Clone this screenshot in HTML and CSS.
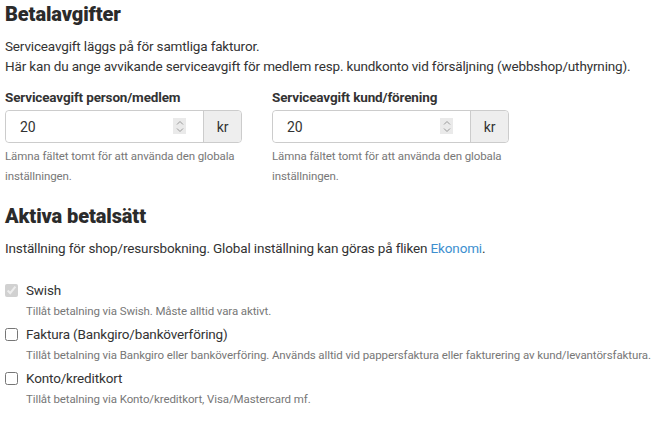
FILE: index.html
```html
<!DOCTYPE html>
<html lang="sv">
<head>
    <meta charset="UTF-8">
    <title>Betalavgifter</title>
    <link rel="stylesheet" href="styles.css">
</head>
<body>
    <div class="settings">
        <h2>Betalavgifter</h2>
        <p>Serviceavgift läggs på för samtliga fakturor.<br>
        Här kan du ange avvikande serviceavgift för medlem resp. kundkonto vid försäljning (webbshop/uthyrning).</p>

        <div class="fee-row">
            <div class="fee-col">
                <label for="feePerson">Serviceavgift person/medlem</label>
                <div class="input-group">
                    <div class="input-wrap">
                        <input type="text" id="feePerson" value="20">
                        <span class="spin"><svg width="12" height="15" viewBox="0 0 12 15"><path d="M3 5.5 6 2.5 9 5.5M3 9.5 6 12.5 9 9.5" fill="none" stroke="#999" stroke-width="1"/></svg></span>
                    </div>
                    <span class="addon">kr</span>
                </div>
                <div class="help">Lämna fältet tomt för att använda den globala inställningen.</div>
            </div>
            <div class="fee-col">
                <label for="feeCustomer">Serviceavgift kund/förening</label>
                <div class="input-group">
                    <div class="input-wrap">
                        <input type="text" id="feeCustomer" value="20">
                        <span class="spin"><svg width="12" height="15" viewBox="0 0 12 15"><path d="M3 5.5 6 2.5 9 5.5M3 9.5 6 12.5 9 9.5" fill="none" stroke="#999" stroke-width="1"/></svg></span>
                    </div>
                    <span class="addon">kr</span>
                </div>
                <div class="help">Lämna fältet tomt för att använda den globala inställningen.</div>
            </div>
        </div>

        <h2 class="second">Aktiva betalsätt</h2>
        <p>Inställning för shop/resursbokning. Global inställning kan göras på fliken <a href="#">Ekonomi</a>.</p>

        <div class="methods">
            <div class="method">
                <label class="check disabled"><input type="checkbox" checked disabled> Swish</label>
                <div class="help">Tillåt betalning via Swish. Måste alltid vara aktivt.</div>
            </div>
            <div class="method">
                <label class="check"><input type="checkbox"> Faktura (Bankgiro/banköverföring)</label>
                <div class="help">Tillåt betalning via Bankgiro eller banköverföring. Används alltid vid pappersfaktura eller fakturering av kund/levantörsfaktura.</div>
            </div>
            <div class="method">
                <label class="check"><input type="checkbox"> Konto/kreditkort</label>
                <div class="help">Tillåt betalning via Konto/kreditkort, Visa/Mastercard mf.</div>
            </div>
        </div>
    </div>
</body>
</html>
```

FILE: styles.css
```css
body {
    font-family: Roboto, Arial, sans-serif;
    margin: 0;
    padding: 0;
    background-color: #fff;
    color: #333;
    font-size: 13.5px;
    letter-spacing: -0.15px;
}
.settings {
    padding: 0 5px;
}
h2 {
    font-size: 20px;
    font-weight: 900;
    color: #2b2b2b;
    margin: 1px 0 9px;
    line-height: 26px;
    letter-spacing: -0.1px;
}
h2.second {
    margin-top: 17px;
}
p {
    margin: 0;
    line-height: 20px;
    white-space: nowrap;
}
.fee-row {
    display: flex;
    gap: 30px;
    margin-top: 11px;
}
.fee-col {
    width: 237px;
}
.fee-col label {
    display: block;
    font-weight: 700;
    line-height: 20px;
    margin-bottom: 3px;
}
.input-group {
    display: flex;
    height: 33px;
    border: 1px solid #ccc;
    border-radius: 4px;
    box-sizing: border-box;
}
.input-wrap {
    position: relative;
    flex: 1;
}
.input-wrap input {
    width: 100%;
    height: 100%;
    box-sizing: border-box;
    border: none;
    border-radius: 4px 0 0 4px;
    padding: 0 14px;
    font-family: inherit;
    font-size: 14px;
    color: #333;
    background: #fff;
    outline: none;
}
.spin {
    position: absolute;
    right: 17px;
    top: 7px;
    width: 13px;
    height: 16px;
    background: #eaeaea;
    display: flex;
    align-items: center;
    justify-content: center;
}
.addon {
    width: 37px;
    border-left: 1px solid #ccc;
    background: #eee;
    border-radius: 0 4px 4px 0;
    display: flex;
    align-items: center;
    justify-content: center;
    font-size: 14px;
}
.help {
    color: #777;
    font-size: 11.5px;
    line-height: 20px;
    margin-top: 3px;
    letter-spacing: -0.1px;
}
a {
    color: #3d8fcf;
    text-decoration: none;
}
.methods {
    margin-top: 22px;
}
.method {
    margin-bottom: 3px;
}
.check {
    display: flex;
    align-items: center;
    gap: 8px;
    line-height: 20px;
}
.check input {
    margin: 0;
    width: 13px;
    height: 13px;
}
.method .help {
    margin: 1px 0 0 21px;
    white-space: nowrap;
}
```
